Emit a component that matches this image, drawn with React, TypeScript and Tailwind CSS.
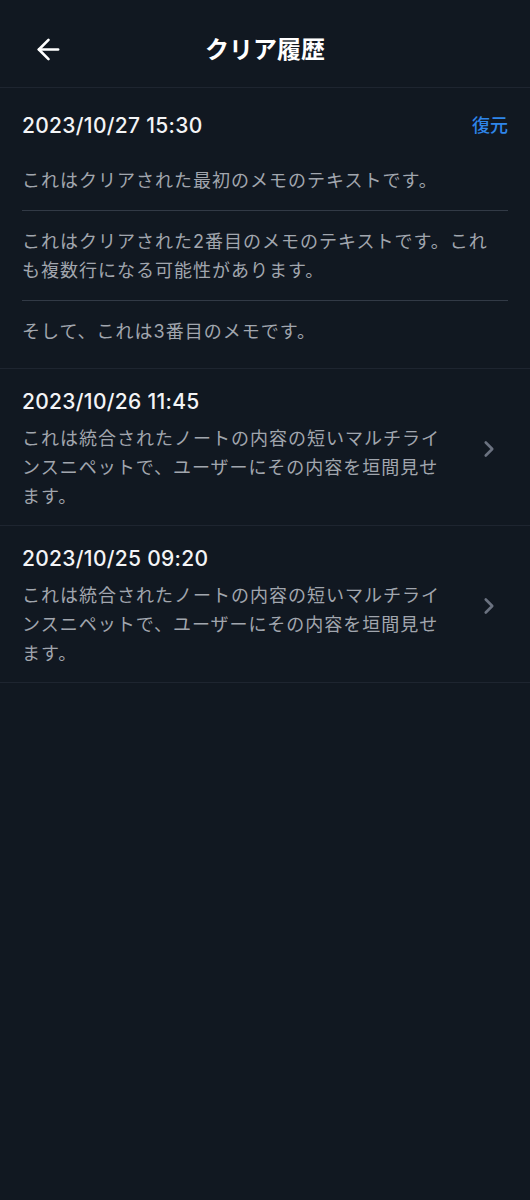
import { ArrowLeft, ChevronRight } from 'lucide-react';

const clearedMemos = [
  'これはクリアされた最初のメモのテキストです。',
  'これはクリアされた2番目のメモのテキストです。これも複数行になる可能性があります。',
  'そして、これは3番目のメモです。',
];

const history = [
  { id: '2', date: '2023/10/26 11:45', snippet: 'これは統合されたノートの内容の短いマルチラインスニペットで、ユーザーにその内容を垣間見せます。' },
  { id: '3', date: '2023/10/25 09:20', snippet: 'これは統合されたノートの内容の短いマルチラインスニペットで、ユーザーにその内容を垣間見せます。' },
];

export default function App() {
  return (
    <div
      className="min-h-[1200px] w-[530px] bg-[#111821] text-white"
      style={{ fontFamily: "Inter, 'Noto Sans CJK JP', sans-serif" }}
    >
      {/* header */}
      <header className="grid h-[88px] grid-cols-[1fr_auto_1fr] items-center border-b border-[#1e2530] pt-3">
        <div className="flex items-center pl-[32px]">
          <ArrowLeft size={33} strokeWidth={1.9} className="text-white" />
        </div>
        <h1 className="text-[24px] font-bold leading-8 text-white">クリア履歴</h1>
        <div />
      </header>

      {/* latest cleared entry, expanded */}
      <section className="border-b border-[#1e2530] px-[22px] pt-6 pb-[7px]">
        <div className="flex items-center justify-between">
          <span className="text-[21px] font-medium leading-7 tracking-[0.3px] text-[#f3f4f6]">2023/10/27 15:30</span>
          <button className="text-[18px] font-medium leading-7 text-[#2f86ea]">復元</button>
        </div>
        <div className="mt-[10px] divide-y divide-[#323a46]">
          {clearedMemos.map((m, i) => (
            <p key={i} className="py-[15.5px] pr-[12px] text-[18px] leading-[29px] tracking-[1px] text-[#a1a6ae]">
              {m}
            </p>
          ))}
        </div>
      </section>

      {/* older entries */}
      {history.map((h) => (
        <section key={h.id} className="flex items-center gap-[26px] border-b border-[#1e2530] pt-[19px] pr-[28px] pb-[14.5px] pl-[22px]">
          <div className="min-w-0 flex-1">
            <div className="text-[21px] font-medium leading-7 tracking-[0.3px] text-[#f3f4f6]">{h.date}</div>
            <p className="mt-[7.5px] text-[18px] leading-[29px] tracking-[1px] text-[#a1a6ae]">{h.snippet}</p>
          </div>
          <ChevronRight size={26} strokeWidth={2.4} className="shrink-0 text-[#6b7280]" />
        </section>
      ))}
    </div>
  );
}
